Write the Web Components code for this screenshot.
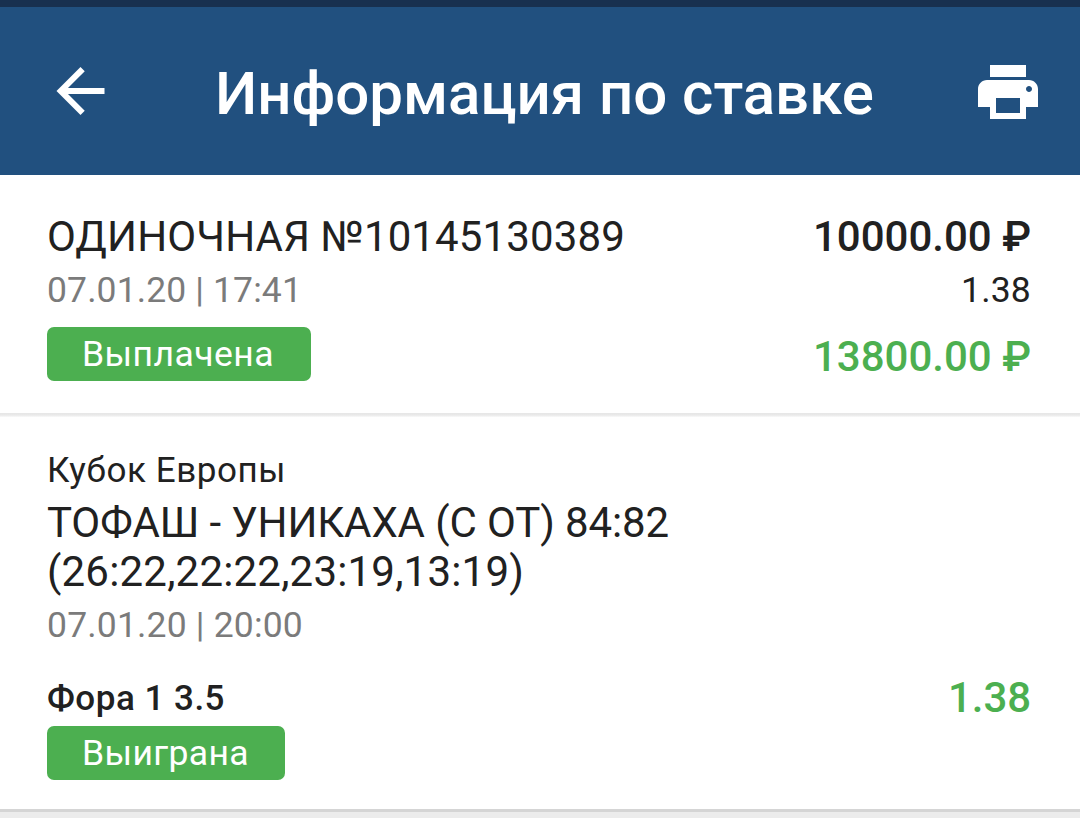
<!DOCTYPE html>
<html lang="ru">
<head>
<meta charset="utf-8">
<title>Информация по ставке</title>
<style>
  body {
    margin: 0;
    height: 818px;
    overflow: hidden;
    background: #ececec;
    font-family: Roboto, "Noto Sans", sans-serif;
    color: #212121;
  }
</style>
</head>
<body>
<bet-screen>
  <app-header slot="header" title-text="Информация по ставке"></app-header>
  <bet-summary>
    <text-line slot="left" size="42" row="58" width="578">ОДИНОЧНАЯ №10145130389</text-line>
    <text-line slot="left" size="35.5" row="48" width="255" tone="muted">07.01.20 | 17:41</text-line>
    <status-badge slot="left" width="264" text-width="192">Выплачена</status-badge>
    <text-line slot="right" size="42" row="58" width="218" weight="500">10000.00 ₽</text-line>
    <text-line slot="right" size="35.5" row="48" width="70">1.38</text-line>
    <text-line slot="right" size="42" row="86" width="218" weight="500" tone="green">13800.00 ₽</text-line>
  </bet-summary>
  <bet-event>
    <text-line size="35" row="50" width="239">Кубок Европы</text-line>
    <text-line size="42" row="54" width="622">ТОФАШ - УНИКАХА (С ОТ) 84:82</text-line>
    <text-line size="42" row="44" width="477">(26:22,22:22,23:19,13:19)</text-line>
    <text-line size="35.5" row="62" width="256" tone="muted">07.01.20 | 20:00</text-line>
    <text-line slot="outcome" size="35" row="52" width="178" weight="500">Фора 1 3.5</text-line>
    <text-line slot="odds" size="42" row="50" width="83" weight="500" tone="green">1.38</text-line>
    <status-badge slot="status" width="238" text-width="167">Выиграна</status-badge>
  </bet-event>
</bet-screen>

<script>
// Letter spacing is worked out so that a line of text takes the given width
function fitText(el, width) {
  el.style.letterSpacing = '0px';
  const natural = el.getBoundingClientRect().width;
  const count = el.textContent.length;
  const spacing = (width - natural) / count;
  el.style.letterSpacing = spacing + 'px';
}

class BetScreen extends HTMLElement {
  constructor() {
    super();
    this.attachShadow({ mode: 'open' });
    this.shadowRoot.innerHTML = `
      <style>
        :host {
          display: flex;
          flex-direction: column;
        }
      </style>
      <slot name="header"></slot>
      <slot></slot>
    `;
  }
}

class AppHeader extends HTMLElement {
  constructor() {
    super();
    this.attachShadow({ mode: 'open' });

    this.BACK_SVG = '<svg class="back" width="73" height="72" viewBox="0 0 24 24"><path fill="#fff" d="M20 11H7.83l5.59-5.59L12 4l-8 8 8 8 1.41-1.41L7.83 13H20v-2z"/></svg>';
    this.PRINT_SVG = '<svg class="print" width="72" height="72" viewBox="0 0 24 24"><path fill="#fff" d="M19 8H5c-1.66 0-3 1.34-3 3v6h4v4h12v-4h4v-6c0-1.66-1.34-3-3-3zm-3 11H8v-5h8v5zm3-7c-.55 0-1-.45-1-1s.45-1 1-1 1 .45 1 1-.45 1-1 1zm-1-9H6v4h12V3z"/></svg>';
  }

  connectedCallback() {
    this.shadowRoot.innerHTML = `
      <style>
        :host {
          display: flex;
          align-items: center;
          justify-content: space-between;
          box-sizing: border-box;
          height: 175px;
          border-top: 7px solid #18304f;
          padding: 0 36px 0 44px;
          background: #21507f;
          color: #fff;
        }
        svg {
          display: block;
        }
        .print {
          margin-top: 2px;
        }
        h1 {
          margin: 6px 0 0;
          font-size: 60px;
          font-weight: 500;
          line-height: 66px;
          white-space: nowrap;
        }
      </style>
      ${this.BACK_SVG}
      <h1>${this.getAttribute('title-text')}</h1>
      ${this.PRINT_SVG}
    `;
    fitText(this.shadowRoot.querySelector('h1'), 659);
  }
}

class TextLine extends HTMLElement {
  constructor() {
    super();
    this.attachShadow({ mode: 'open' });
  }

  connectedCallback() {
    const tones = { muted: '#7b7b7b', green: '#4caf50' };
    this.shadowRoot.innerHTML = `
      <style>
        :host {
          display: block;
          height: ${this.getAttribute('row')}px;
          font-size: ${this.getAttribute('size')}px;
          font-weight: ${this.getAttribute('weight') || 400};
          line-height: ${this.getAttribute('row')}px;
          color: ${tones[this.getAttribute('tone')] || '#212121'};
          white-space: nowrap;
        }
        span {
          display: inline-block;
        }
      </style>
      <span></span>
    `;
    const span = this.shadowRoot.querySelector('span');
    span.textContent = this.textContent;
    fitText(span, parseFloat(this.getAttribute('width')));
  }
}

class StatusBadge extends HTMLElement {
  constructor() {
    super();
    this.attachShadow({ mode: 'open' });
  }

  connectedCallback() {
    this.shadowRoot.innerHTML = `
      <style>
        :host {
          display: block;
          box-sizing: border-box;
          width: ${this.getAttribute('width')}px;
          height: 54px;
          padding-left: 35px;
          border-radius: 7px;
          background: #4caf50;
          color: #fff;
          font-size: 35.5px;
          line-height: 55px;
          white-space: nowrap;
        }
        span {
          display: inline-block;
        }
      </style>
      <span></span>
    `;
    const span = this.shadowRoot.querySelector('span');
    span.textContent = this.textContent;
    fitText(span, parseFloat(this.getAttribute('text-width')));
  }
}

class BetSummary extends HTMLElement {
  constructor() {
    super();
    this.attachShadow({ mode: 'open' });
    this.shadowRoot.innerHTML = `
      <style>
        :host {
          display: flex;
          flex-direction: column;
          height: 242px;
          background: #fff;
        }
        .columns {
          flex: 1;
          display: flex;
          justify-content: space-between;
          padding: 33px 49px 0 47px;
        }
        .left ::slotted(status-badge) {
          margin-top: 13px;
        }
        .right {
          text-align: right;
        }
        .divider {
          height: 4px;
          background: linear-gradient(#e6e6e6, #e9e9e9 50%, #fafafa);
        }
      </style>
      <div class="columns">
        <div class="left"><slot name="left"></slot></div>
        <div class="right"><slot name="right"></slot></div>
      </div>
      <div class="divider"></div>
    `;
  }
}

class BetEvent extends HTMLElement {
  constructor() {
    super();
    this.attachShadow({ mode: 'open' });
    this.shadowRoot.innerHTML = `
      <style>
        :host {
          display: block;
          box-sizing: border-box;
          height: 395px;
          padding: 29px 49px 0 47px;
          border-bottom: 3px solid #d5d5d5;
          background: #fff;
        }
        .result {
          display: flex;
          justify-content: space-between;
          height: 53px;
          margin-top: 17px;
        }
      </style>
      <slot></slot>
      <div class="result">
        <slot name="outcome"></slot>
        <slot name="odds"></slot>
      </div>
      <slot name="status"></slot>
    `;
  }
}

customElements.define('bet-screen', BetScreen);
customElements.define('app-header', AppHeader);
customElements.define('text-line', TextLine);
customElements.define('status-badge', StatusBadge);
customElements.define('bet-summary', BetSummary);
customElements.define('bet-event', BetEvent);
</script>
</body>
</html>
